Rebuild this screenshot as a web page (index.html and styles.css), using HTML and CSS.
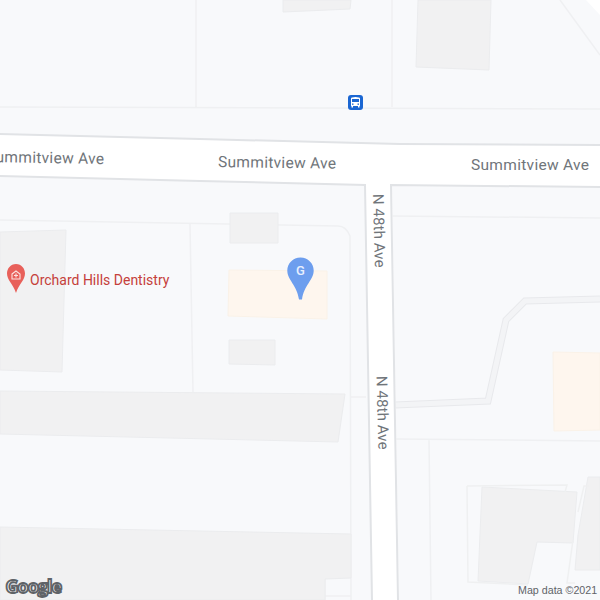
FILE: index.html
```html
<!DOCTYPE html>
<html lang="en">
<head>
<meta charset="utf-8">
<title>Map</title>
<link rel="stylesheet" href="styles.css">
</head>
<body>
<main class="map">
<svg class="canvas" width="600" height="600" viewBox="0 0 600 600">
  <!-- parcels -->
  <g class="parcel">
    <path d="M196 0V107M392 0V107M0 107L600 109"/>
    <path d="M0 220L338 226Q346 226 350 236L351 600"/>
    <path d="M190 224L193 392"/>
    <path d="M392 216L600 218M429 440L431 600M396 439L600 441"/>
    <path d="M560 0L600 55"/>
    <path d="M351 397H366M325 579V600M325 596H351"/>
  </g>
  <path class="lane" d="M586 0L600 15V0Z"/>

  <!-- buildings -->
  <g class="building">
    <path d="M283 0H351L350 9L283 12Z"/>
    <path d="M418 0H491L489 70L416 67Z"/>
    <path d="M0 232L66 230L62 372L0 370Z"/>
    <path d="M230 213H278V243L230 243Z"/>
    <path d="M229 340H275V365L229 364Z"/>
    <path d="M0 391L345 394L338 442L0 434Z"/>
    <path d="M0 527L351 534V578L325 579V600H0Z"/>
    <path d="M482 487L577 492L573 543L537 542L528 584L478 581Z"/>
    <path d="M588 477H600V570H575L578 535Z"/>
  </g>
  <g class="outline">
    <path d="M467 486L567 485L565 492M467 486L468 582L528 585"/>
    <path d="M578 512L584 486H589M573 540L567 583H575"/>
  </g>
  <g class="peach">
    <path d="M229 270L327 271V319L228 316Z"/>
    <path d="M553 352L600 353V430L554 431Z"/>
  </g>

  <!-- driveway -->
  <path class="drive-edge" d="M395 405L488 401L506 320L525 301L600 299"/>
  <path class="drive-fill" d="M395 405L488 401L506 320L525 301L600 299"/>

  <!-- roads -->
  <path class="road" d="M0 134L200 139L400 144L600 145V187L392 185L399 600H372L365 185L200 181L0 176Z"/>
  <path class="road-edge" d="M0 134L200 139L400 144L600 145M0 176L200 181L365 185L372 600M600 187L391 185L398 600"/>

  <!-- labels -->
  <text class="street" transform="translate(-14 162) rotate(1)">Summitview Ave</text>
  <text class="street" transform="translate(218 167) rotate(.8)">Summitview Ave</text>
  <text class="street" transform="translate(471 170)">Summitview Ave</text>
  <text class="street avenue" transform="translate(373 194) rotate(88.500)">N 48th Ave</text>
  <text class="street avenue" transform="translate(376.500 376) rotate(88.500)">N 48th Ave</text>
  <text class="poi" x="30" y="285">Orchard Hills Dentistry</text>

  <!-- dentist pin -->
  <path class="poi-pin" d="M16 264C10.500 264 7 268.500 7 273.500C7 280 13 284 16 293C19 284 25 280 25 273.500C25 268.500 21.500 264 16 264Z"/>
  <path class="poi-glyph" d="M12 274L16 271L20 274V279H12ZM16 273.500V277.500M14 275.500H18"/>

  <!-- business marker -->
  <path class="pin" d="M300.500 257.500C293 257.500 287.300 263.500 287.300 270.500C287.300 280 297 285 299 299.500H302C304 285 313.700 280 313.700 270.500C313.700 263.500 308 257.500 300.500 257.500Z"/>
  <text class="pin-letter" x="300.500" y="275">G</text>

  <!-- transit -->
  <rect class="bus-bg" x="348" y="95" width="15" height="15" rx="3"/>
  <path class="bus-glyph" d="M351 98.500Q351 97 355.500 97Q360 97 360 98.500V106H359.500V107.500H358V106H353V107.500H351.500V106H351Z"/>
  <rect class="bus-bg" x="352" y="99" width="7" height="3"/>
  <rect class="bus-bg" x="352" y="103.500" width="1.500" height="1.300"/>
  <rect class="bus-bg" x="357.500" y="103.500" width="1.500" height="1.300"/>

  <text class="logo" x="5.500" y="593">Google</text>
  <text class="credit" x="518" y="594">Map data ©2021</text>
</svg>
</main>
</body>
</html>
```
FILE: styles.css
```css
html, body { margin: 0; padding: 0; background: #f8f9fb; }
.map { position: relative; width: 600px; height: 600px; overflow: hidden; }
.canvas { display: block; }

.parcel path { fill: none; stroke: #eff0f2; stroke-width: 1.5; }
.lane { fill: #ffffff; }
.building path { fill: #f1f1f2; stroke: #ebecee; stroke-width: 1; }
.outline path { fill: none; stroke: #eff0f1; stroke-width: 1.5; }
.peach path { fill: #fef6ee; stroke: #faf2e8; stroke-width: 1; }

.drive-edge { fill: none; stroke: #e8e9ec; stroke-width: 7; stroke-linejoin: miter; }
.drive-fill { fill: none; stroke: #f3f4f6; stroke-width: 5; stroke-linejoin: miter; }

.road { fill: #ffffff; }
.road-edge { fill: none; stroke: #e1e3e6; stroke-width: 2; }

.street { font: 15.500px Roboto, sans-serif; letter-spacing: 0.3px; fill: #70757a; }
.avenue { font-size: 15px; letter-spacing: 0.1px; }
.poi { font: 14px Roboto, sans-serif; fill: #c5403a; }
.poi-pin { fill: #e8605a; }
.poi-glyph { fill: none; stroke: #fbe3e1; stroke-width: 1.100; }

.pin { fill: #6d9eee; }
.pin-letter { font: 500 13px Roboto, sans-serif; fill: #e8f0fe; text-anchor: middle; }

.bus-bg { fill: #1a66d2; }
.bus-glyph { fill: #ffffff; }

.logo {
  font: 700 18px "Open Sans", sans-serif;
  letter-spacing: -1px;
  fill: #ffffff;
  stroke: #5f6368;
  stroke-width: 1.800px;
}
.credit { font: 10.700px "Liberation Sans", Arial, sans-serif; fill: #5f6368; }
```
